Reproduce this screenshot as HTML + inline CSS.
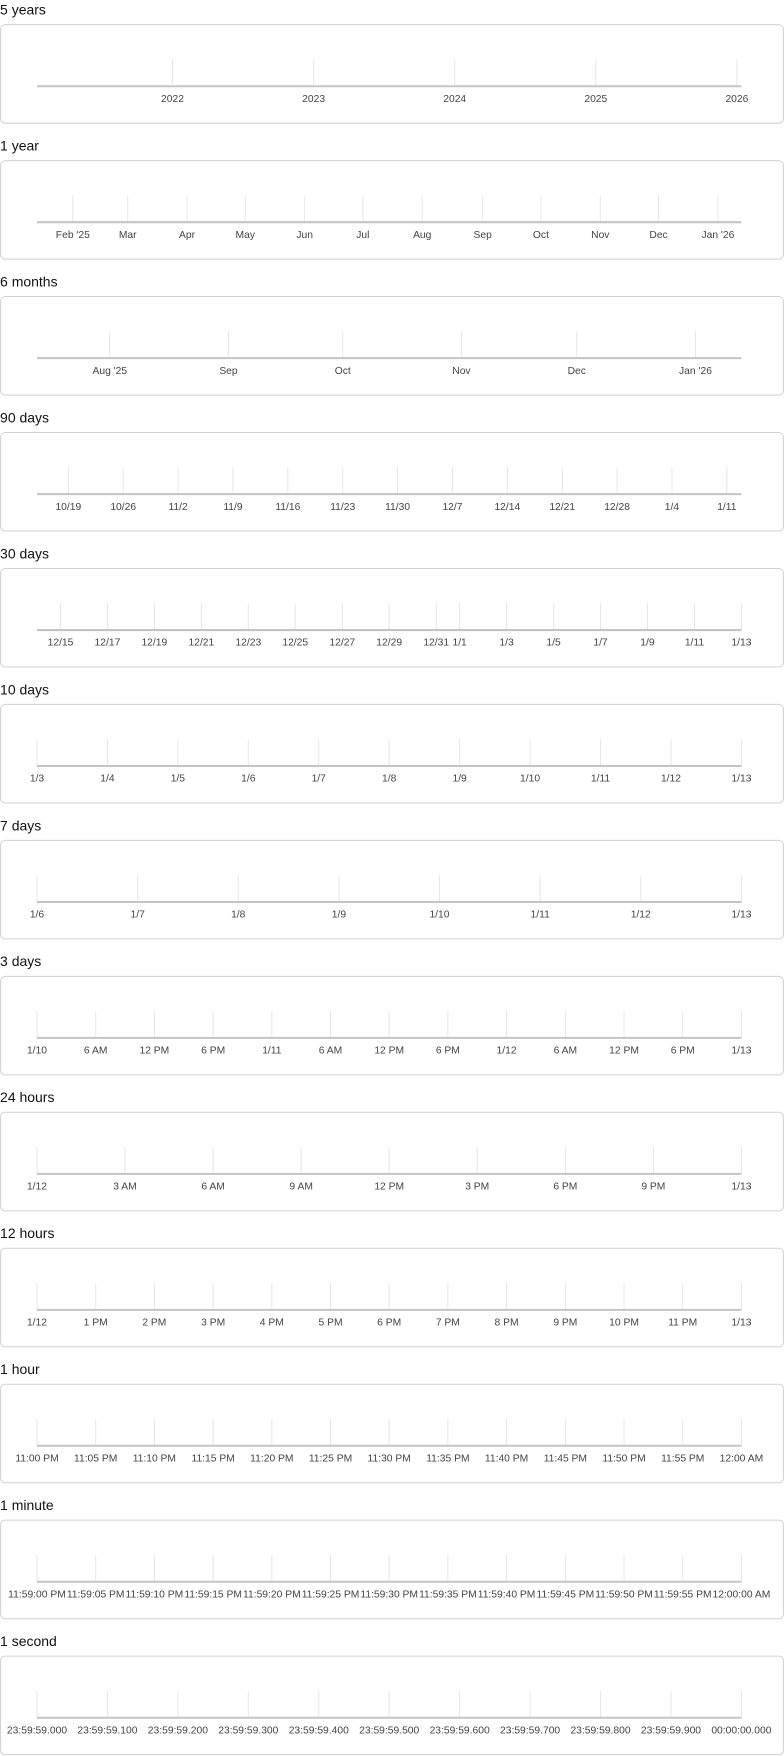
<!DOCTYPE html>
<html><head><meta charset="utf-8"><style>
html,body{margin:0;padding:0;background:#fff}
svg{display:block}
.t{font-family:"Liberation Sans",sans-serif;font-size:12.5px;fill:#111}
.l{font-family:"Liberation Sans",sans-serif;font-size:9.2px;fill:#444;text-anchor:middle}
.box{fill:#fff;stroke:#d0d0d0;stroke-width:0.9}
.ax{stroke:#c4c4c4;stroke-width:1.8}
.tk{stroke:#e6e6e6;stroke-width:0.9}
</style></head><body>
<svg width="784" height="1756" viewBox="0 0 700 1568" xmlns="http://www.w3.org/2000/svg">

<g transform="translate(0,0)">
<text class="t" x="0" y="13">5 years</text>
<rect class="box" x="0.5" y="22" width="699" height="88" rx="4"/>
<path class="tk" d="M154 53V77M280 53V77M406 53V77M532 53V77M658 53V77"/>
<line class="ax" x1="33" y1="77" x2="662" y2="77"/>
<text class="l" x="154" y="91">2022</text><text class="l" x="280" y="91">2023</text><text class="l" x="406" y="91">2024</text><text class="l" x="532" y="91">2025</text><text class="l" x="658" y="91">2026</text>
</g>

<g transform="translate(0,121.4)">
<text class="t" x="0" y="13">1 year</text>
<rect class="box" x="0.5" y="22" width="699" height="88" rx="4"/>
<path class="tk" d="M65 53V77M114 53V77M167 53V77M219 53V77M272 53V77M324 53V77M377 53V77M431 53V77M483 53V77M536 53V77M588 53V77M641 53V77"/>
<line class="ax" x1="33" y1="77" x2="662" y2="77"/>
<text class="l" x="65" y="91">Feb '25</text><text class="l" x="114" y="91">Mar</text><text class="l" x="167" y="91">Apr</text><text class="l" x="219" y="91">May</text><text class="l" x="272" y="91">Jun</text><text class="l" x="324" y="91">Jul</text><text class="l" x="377" y="91">Aug</text><text class="l" x="431" y="91">Sep</text><text class="l" x="483" y="91">Oct</text><text class="l" x="536" y="91">Nov</text><text class="l" x="588" y="91">Dec</text><text class="l" x="641" y="91">Jan '26</text>
</g>

<g transform="translate(0,242.8)">
<text class="t" x="0" y="13">6 months</text>
<rect class="box" x="0.5" y="22" width="699" height="88" rx="4"/>
<path class="tk" d="M98 53V77M204 53V77M306 53V77M412 53V77M515 53V77M621 53V77"/>
<line class="ax" x1="33" y1="77" x2="662" y2="77"/>
<text class="l" x="98" y="91">Aug '25</text><text class="l" x="204" y="91">Sep</text><text class="l" x="306" y="91">Oct</text><text class="l" x="412" y="91">Nov</text><text class="l" x="515" y="91">Dec</text><text class="l" x="621" y="91">Jan '26</text>
</g>

<g transform="translate(0,364.2)">
<text class="t" x="0" y="13">90 days</text>
<rect class="box" x="0.5" y="22" width="699" height="88" rx="4"/>
<path class="tk" d="M61 53V77M110 53V77M159 53V77M208 53V77M257 53V77M306 53V77M355 53V77M404 53V77M453 53V77M502 53V77M551 53V77M600 53V77M649 53V77"/>
<line class="ax" x1="33" y1="77" x2="662" y2="77"/>
<text class="l" x="61" y="91">10/19</text><text class="l" x="110" y="91">10/26</text><text class="l" x="159" y="91">11/2</text><text class="l" x="208" y="91">11/9</text><text class="l" x="257" y="91">11/16</text><text class="l" x="306" y="91">11/23</text><text class="l" x="355" y="91">11/30</text><text class="l" x="404" y="91">12/7</text><text class="l" x="453" y="91">12/14</text><text class="l" x="502" y="91">12/21</text><text class="l" x="551" y="91">12/28</text><text class="l" x="600" y="91">1/4</text><text class="l" x="649" y="91">1/11</text>
</g>

<g transform="translate(0,485.6)">
<text class="t" x="0" y="13">30 days</text>
<rect class="box" x="0.5" y="22" width="699" height="88" rx="4"/>
<path class="tk" d="M54 53V77M95.9 53V77M137.8 53V77M179.8 53V77M221.7 53V77M263.6 53V77M305.6 53V77M347.5 53V77M389.5 53V77M410.4 53V77M452.3 53V77M494.3 53V77M536.2 53V77M578.1 53V77M620.1 53V77M662 53V77"/>
<line class="ax" x1="33" y1="77" x2="662" y2="77"/>
<text class="l" x="54" y="91">12/15</text><text class="l" x="95.9" y="91">12/17</text><text class="l" x="137.8" y="91">12/19</text><text class="l" x="179.8" y="91">12/21</text><text class="l" x="221.7" y="91">12/23</text><text class="l" x="263.6" y="91">12/25</text><text class="l" x="305.6" y="91">12/27</text><text class="l" x="347.5" y="91">12/29</text><text class="l" x="389.5" y="91">12/31</text><text class="l" x="410.4" y="91">1/1</text><text class="l" x="452.3" y="91">1/3</text><text class="l" x="494.3" y="91">1/5</text><text class="l" x="536.2" y="91">1/7</text><text class="l" x="578.1" y="91">1/9</text><text class="l" x="620.1" y="91">1/11</text><text class="l" x="662" y="91">1/13</text>
</g>

<g transform="translate(0,607)">
<text class="t" x="0" y="13">10 days</text>
<rect class="box" x="0.5" y="22" width="699" height="88" rx="4"/>
<path class="tk" d="M33 53V77M95.9 53V77M158.8 53V77M221.7 53V77M284.6 53V77M347.5 53V77M410.4 53V77M473.3 53V77M536.2 53V77M599.1 53V77M662 53V77"/>
<line class="ax" x1="33" y1="77" x2="662" y2="77"/>
<text class="l" x="33" y="91">1/3</text><text class="l" x="95.9" y="91">1/4</text><text class="l" x="158.8" y="91">1/5</text><text class="l" x="221.7" y="91">1/6</text><text class="l" x="284.6" y="91">1/7</text><text class="l" x="347.5" y="91">1/8</text><text class="l" x="410.4" y="91">1/9</text><text class="l" x="473.3" y="91">1/10</text><text class="l" x="536.2" y="91">1/11</text><text class="l" x="599.1" y="91">1/12</text><text class="l" x="662" y="91">1/13</text>
</g>

<g transform="translate(0,728.4)">
<text class="t" x="0" y="13">7 days</text>
<rect class="box" x="0.5" y="22" width="699" height="88" rx="4"/>
<path class="tk" d="M33 53V77M122.9 53V77M212.7 53V77M302.6 53V77M392.4 53V77M482.3 53V77M572.1 53V77M662 53V77"/>
<line class="ax" x1="33" y1="77" x2="662" y2="77"/>
<text class="l" x="33" y="91">1/6</text><text class="l" x="122.9" y="91">1/7</text><text class="l" x="212.7" y="91">1/8</text><text class="l" x="302.6" y="91">1/9</text><text class="l" x="392.4" y="91">1/10</text><text class="l" x="482.3" y="91">1/11</text><text class="l" x="572.1" y="91">1/12</text><text class="l" x="662" y="91">1/13</text>
</g>

<g transform="translate(0,849.8)">
<text class="t" x="0" y="13">3 days</text>
<rect class="box" x="0.5" y="22" width="699" height="88" rx="4"/>
<path class="tk" d="M33 53V77M85.4 53V77M137.8 53V77M190.3 53V77M242.7 53V77M295.1 53V77M347.5 53V77M399.9 53V77M452.3 53V77M504.8 53V77M557.2 53V77M609.6 53V77M662 53V77"/>
<line class="ax" x1="33" y1="77" x2="662" y2="77"/>
<text class="l" x="33" y="91">1/10</text><text class="l" x="85.4" y="91">6 AM</text><text class="l" x="137.8" y="91">12 PM</text><text class="l" x="190.3" y="91">6 PM</text><text class="l" x="242.7" y="91">1/11</text><text class="l" x="295.1" y="91">6 AM</text><text class="l" x="347.5" y="91">12 PM</text><text class="l" x="399.9" y="91">6 PM</text><text class="l" x="452.3" y="91">1/12</text><text class="l" x="504.8" y="91">6 AM</text><text class="l" x="557.2" y="91">12 PM</text><text class="l" x="609.6" y="91">6 PM</text><text class="l" x="662" y="91">1/13</text>
</g>

<g transform="translate(0,971.2)">
<text class="t" x="0" y="13">24 hours</text>
<rect class="box" x="0.5" y="22" width="699" height="88" rx="4"/>
<path class="tk" d="M33 53V77M111.6 53V77M190.3 53V77M268.9 53V77M347.5 53V77M426.1 53V77M504.8 53V77M583.4 53V77M662 53V77"/>
<line class="ax" x1="33" y1="77" x2="662" y2="77"/>
<text class="l" x="33" y="91">1/12</text><text class="l" x="111.6" y="91">3 AM</text><text class="l" x="190.3" y="91">6 AM</text><text class="l" x="268.9" y="91">9 AM</text><text class="l" x="347.5" y="91">12 PM</text><text class="l" x="426.1" y="91">3 PM</text><text class="l" x="504.8" y="91">6 PM</text><text class="l" x="583.4" y="91">9 PM</text><text class="l" x="662" y="91">1/13</text>
</g>

<g transform="translate(0,1092.6)">
<text class="t" x="0" y="13">12 hours</text>
<rect class="box" x="0.5" y="22" width="699" height="88" rx="4"/>
<path class="tk" d="M33 53V77M85.4 53V77M137.8 53V77M190.3 53V77M242.7 53V77M295.1 53V77M347.5 53V77M399.9 53V77M452.3 53V77M504.8 53V77M557.2 53V77M609.6 53V77M662 53V77"/>
<line class="ax" x1="33" y1="77" x2="662" y2="77"/>
<text class="l" x="33" y="91">1/12</text><text class="l" x="85.4" y="91">1 PM</text><text class="l" x="137.8" y="91">2 PM</text><text class="l" x="190.3" y="91">3 PM</text><text class="l" x="242.7" y="91">4 PM</text><text class="l" x="295.1" y="91">5 PM</text><text class="l" x="347.5" y="91">6 PM</text><text class="l" x="399.9" y="91">7 PM</text><text class="l" x="452.3" y="91">8 PM</text><text class="l" x="504.8" y="91">9 PM</text><text class="l" x="557.2" y="91">10 PM</text><text class="l" x="609.6" y="91">11 PM</text><text class="l" x="662" y="91">1/13</text>
</g>

<g transform="translate(0,1214)">
<text class="t" x="0" y="13">1 hour</text>
<rect class="box" x="0.5" y="22" width="699" height="88" rx="4"/>
<path class="tk" d="M33 53V77M85.4 53V77M137.8 53V77M190.3 53V77M242.7 53V77M295.1 53V77M347.5 53V77M399.9 53V77M452.3 53V77M504.8 53V77M557.2 53V77M609.6 53V77M662 53V77"/>
<line class="ax" x1="33" y1="77" x2="662" y2="77"/>
<text class="l" x="33" y="91">11:00 PM</text><text class="l" x="85.4" y="91">11:05 PM</text><text class="l" x="137.8" y="91">11:10 PM</text><text class="l" x="190.3" y="91">11:15 PM</text><text class="l" x="242.7" y="91">11:20 PM</text><text class="l" x="295.1" y="91">11:25 PM</text><text class="l" x="347.5" y="91">11:30 PM</text><text class="l" x="399.9" y="91">11:35 PM</text><text class="l" x="452.3" y="91">11:40 PM</text><text class="l" x="504.8" y="91">11:45 PM</text><text class="l" x="557.2" y="91">11:50 PM</text><text class="l" x="609.6" y="91">11:55 PM</text><text class="l" x="662" y="91">12:00 AM</text>
</g>

<g transform="translate(0,1335.4)">
<text class="t" x="0" y="13">1 minute</text>
<rect class="box" x="0.5" y="22" width="699" height="88" rx="4"/>
<path class="tk" d="M33 53V77M85.4 53V77M137.8 53V77M190.3 53V77M242.7 53V77M295.1 53V77M347.5 53V77M399.9 53V77M452.3 53V77M504.8 53V77M557.2 53V77M609.6 53V77M662 53V77"/>
<line class="ax" x1="33" y1="77" x2="662" y2="77"/>
<g style="font-size:8.8px">
<text class="l" x="33" y="91">11:59:00 PM</text><text class="l" x="85.4" y="91">11:59:05 PM</text><text class="l" x="137.8" y="91">11:59:10 PM</text><text class="l" x="190.3" y="91">11:59:15 PM</text><text class="l" x="242.7" y="91">11:59:20 PM</text><text class="l" x="295.1" y="91">11:59:25 PM</text><text class="l" x="347.5" y="91">11:59:30 PM</text><text class="l" x="399.9" y="91">11:59:35 PM</text><text class="l" x="452.3" y="91">11:59:40 PM</text><text class="l" x="504.8" y="91">11:59:45 PM</text><text class="l" x="557.2" y="91">11:59:50 PM</text><text class="l" x="609.6" y="91">11:59:55 PM</text><text class="l" x="662" y="91">12:00:00 AM</text>
</g>
</g>

<g transform="translate(0,1456.8)">
<text class="t" x="0" y="13">1 second</text>
<rect class="box" x="0.5" y="22" width="699" height="88" rx="4"/>
<path class="tk" d="M33 53V77M95.9 53V77M158.8 53V77M221.7 53V77M284.6 53V77M347.5 53V77M410.4 53V77M473.3 53V77M536.2 53V77M599.1 53V77M662 53V77"/>
<line class="ax" x1="33" y1="77" x2="662" y2="77"/>
<text class="l" x="33" y="91">23:59:59.000</text><text class="l" x="95.9" y="91">23:59:59.100</text><text class="l" x="158.8" y="91">23:59:59.200</text><text class="l" x="221.7" y="91">23:59:59.300</text><text class="l" x="284.6" y="91">23:59:59.400</text><text class="l" x="347.5" y="91">23:59:59.500</text><text class="l" x="410.4" y="91">23:59:59.600</text><text class="l" x="473.3" y="91">23:59:59.700</text><text class="l" x="536.2" y="91">23:59:59.800</text><text class="l" x="599.1" y="91">23:59:59.900</text><text class="l" x="662" y="91">00:00:00.000</text>
</g>

</svg>
</body></html>
